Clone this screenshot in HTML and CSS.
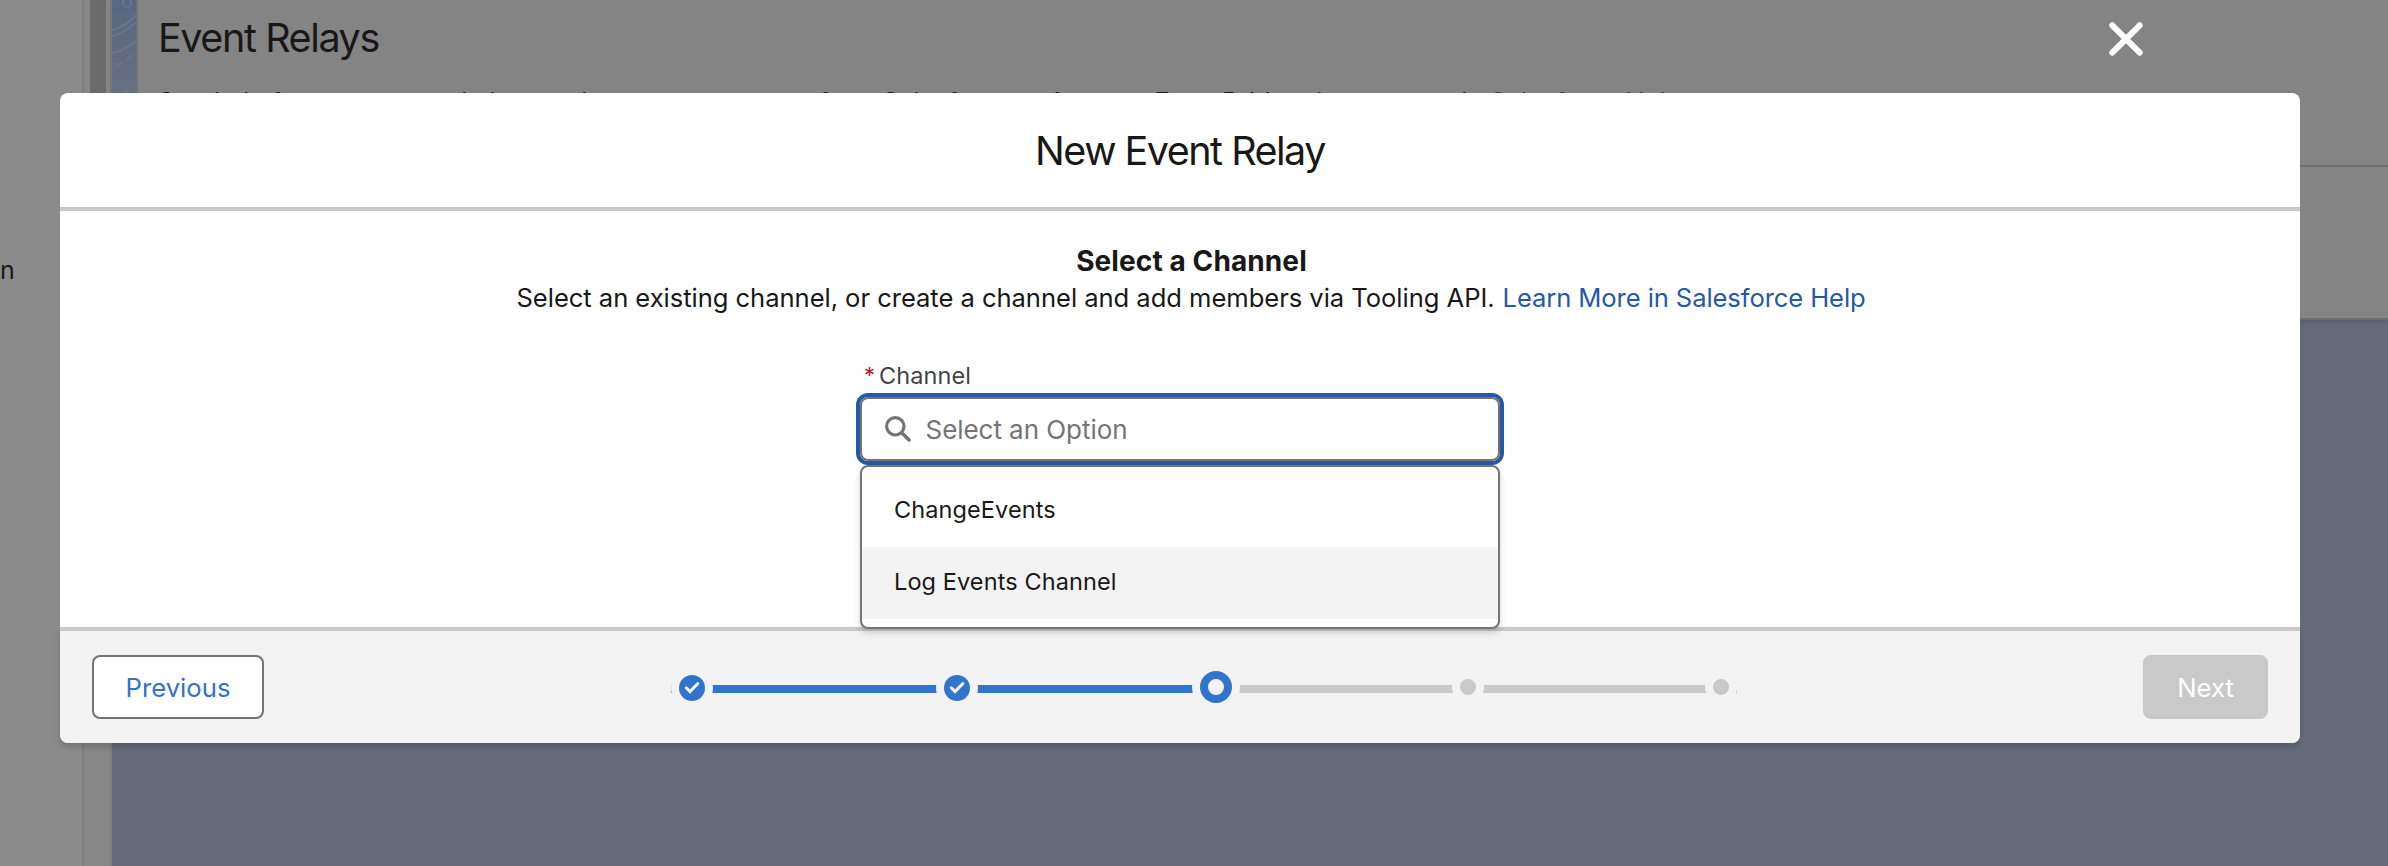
FILE: index.html
```html
<!DOCTYPE html>
<html lang="en">
<head>
<meta charset="utf-8">
<title>Event Relays</title>
<link rel="stylesheet" href="styles.css">
</head>
<body>
<div class="app">
  <aside class="sidebar"><span class="nav-tail">n</span></aside>
  <div class="gutter"><div class="scroll-thumb"></div></div>
  <main class="page">
    <div class="panel-row">
      <svg class="pattern" viewBox="0 0 24 94" fill="none" stroke="#6b7a92" stroke-width="1.5">
        <circle cx="15" cy="3" r="4"/>
        <path d="M0 30Q14 27 24 15M0 36Q15 32 24 22M0 53Q14 50 24 41"/>
        <path d="M4 65l6-2M15 60l5-5M11 92l7-2"/>
      </svg>
      <section class="panel">
        <div class="panel-head">
          <h1 class="page-title">Event Relays</h1>
          <p class="page-intro"><span>Send platform events and change data capture events from Salesforce to Amazon EventBridge.</span> <a class="intro-link">Learn more in Salesforce Help</a></p>
        </div>
      </section>
    </div>
  </main>
</div>

<svg class="close" viewBox="0 0 34 34" stroke="#fff" stroke-width="6" stroke-linecap="round"><path d="M3.3 3.3l27.4 27.4M30.7 3.3L3.3 30.7"/></svg>

<div class="modal">
  <header class="modal-head"><h2 class="modal-title">New Event Relay</h2></header>
  <div class="modal-body">
    <h3 class="step-title">Select a Channel</h3>
    <p class="step-text"><span class="step-copy">Select an existing channel, or create a channel and add members via Tooling API.</span><a class="step-link">Learn More in Salesforce Help</a></p>
    <div class="field">
      <div class="label"><span class="required">*</span><span class="label-text">Channel</span></div>
      <div class="combo">
        <svg class="search" viewBox="0 0 26 26" fill="none" stroke="#747474" stroke-width="3.2" stroke-linecap="round"><circle cx="10.3" cy="10.3" r="8.7"/><path d="M17 17l7 7" stroke-width="3.6"/></svg>
        <span class="placeholder">Select an Option</span>
        <div class="menu">
          <div class="option"><span>ChangeEvents</span></div>
          <div class="option active"><span>Log Events Channel</span></div>
        </div>
      </div>
    </div>
  </div>
  <footer class="modal-foot">
    <button class="btn prev">Previous</button>
    <div class="progress">
      <i class="bar done stub"></i>
      <i class="mark check"><svg viewBox="0 0 26 26" fill="none" stroke="#f3f3f3" stroke-width="3" stroke-linecap="round"><path d="M7.3 12.8L11 16.6L18.8 8.6"/></svg></i>
      <i class="bar done g1"></i>
      <i class="mark check"><svg viewBox="0 0 26 26" fill="none" stroke="#f3f3f3" stroke-width="3" stroke-linecap="round"><path d="M7.3 12.8L11 16.6L18.8 8.6"/></svg></i>
      <i class="bar done g2"></i>
      <i class="mark current"></i>
      <i class="bar g3"></i>
      <i class="mark dot"></i>
      <i class="bar g4"></i>
      <i class="mark dot"></i>
      <i class="bar stub"></i>
    </div>
    <button class="btn next">Next</button>
  </footer>
</div>
</body>
</html>
```

FILE: styles.css
```css
* { box-sizing: border-box; }
body {
  margin: 0;
  width: 2388px;
  height: 866px;
  overflow: hidden;
  position: relative;
  font-family: Inter, "Liberation Sans", sans-serif;
  color: #181818;
}
h1, h2, h3, p { margin: 0; font-weight: 400; }
span, a { white-space: nowrap; }

.app { display: flex; height: 866px; }
.sidebar {
  width: 84px;
  background: #8b8b8b;
  border-right: 2px solid #7f7f7f;
  padding-top: 254px;
}
.nav-tail { font-size: 25px; line-height: 32px; }
.gutter {
  width: 28px;
  background: #878787;
  border-right: 2px solid #7f7f7f;
  padding-left: 6px;
}
.scroll-thumb { width: 16px; height: 110px; background: #6b6b6b; }
.page { flex: 1; background: #656b79; }
.panel-row {
  display: flex;
  height: 320px;
  box-shadow: 0 2px 6px rgba(0, 0, 0, .15);
}
.pattern { width: 24px; height: 94px; background: linear-gradient(#586880, #676f84); }
.panel {
  flex: 1;
  background: #848484;
  border-left: 2px solid #737373;
  border-bottom: 2px solid #6f6f6f;
}
.panel-head { height: 167px; border-bottom: 2px solid #6f6f6f; padding: 14px 0 0 20px; }
.page-title { font-size: 39.5px; line-height: 48px; letter-spacing: -1.4px; }
.page-intro { font-size: 25.6px; line-height: 40px; margin-top: 20px; }
.intro-link { color: #153a6e; }

.close { position: absolute; left: 2109px; top: 22px; width: 34px; height: 34px; }

.modal {
  position: absolute;
  left: 60px;
  top: 93px;
  width: 2240px;
  height: 650px;
  display: flex;
  flex-direction: column;
  background: #fff;
  border-radius: 8px;
}
.modal-head {
  height: 118px;
  border-bottom: 4px solid #c9c9c9;
  padding-top: 34px;
  text-align: center;
}
.modal-title { font-size: 39.5px; line-height: 48px; letter-spacing: -1.5px; }
.modal-body {
  flex: 1;
  display: flex;
  flex-direction: column;
  align-items: center;
  padding-top: 32px;
}
.step-title { font-size: 28px; font-weight: 700; line-height: 36px; letter-spacing: .1px; margin-left: 23px; }
.step-text { display: flex; gap: 8px; width: 1350px; margin-left: 23px; margin-top: 1px; font-size: 25.6px; line-height: 36px; letter-spacing: -.05px; }
.step-link { color: #2559a8; letter-spacing: -.1px; }
.field { width: 640px; margin-top: 43px; }
.label { display: flex; height: 38px; gap: 5px; padding-left: 4px; font-size: 23.5px; line-height: 33px; letter-spacing: .1px; color: #444; }
.required { color: #b4221c; width: 10px; font-size: 22px; }
.combo {
  position: relative;
  display: flex;
  align-items: center;
  height: 64px;
  padding-left: 23px;
  gap: 14.5px;
  border: 2px solid #747474;
  border-radius: 8px;
  box-shadow: 0 0 0 4px #2659a5;
}
.search { width: 26px; height: 26px; }
.placeholder { font-size: 26px; letter-spacing: -.05px; color: #747474; }
.menu {
  position: absolute;
  left: -2px;
  top: 66px;
  width: 640px;
  height: 164px;
  padding: 8px 0;
  background: #fff;
  border: 2px solid #747474;
  border-radius: 8px;
  box-shadow: 0 4px 6px rgba(0, 0, 0, .16);
  z-index: 2;
}
.option { height: 72px; padding-left: 32px; font-size: 23.5px; line-height: 70px; letter-spacing: .1px; }
.active { background: #f3f3f3; }

.modal-foot {
  display: flex;
  align-items: center;
  height: 116px;
  padding: 0 32px;
  background: #f3f3f3;
  border-top: 4px solid #c9c9c9;
  border-radius: 0 0 8px 8px;
  box-shadow: 0 4px 6px rgba(0, 0, 0, .16);
}
.btn {
  height: 64px;
  padding: 0;
  border: 2px solid #747474;
  border-radius: 8px;
  background: #fff;
  font-family: inherit;
  font-size: 25.7px;
}
.prev { width: 172px; color: #3273cc; }
.next { width: 125px; margin-left: auto; border-color: #c9c9c9; background: #c9c9c9; color: #fff; }
.progress { display: flex; align-items: center; margin-left: 407px; height: 32px; }
.bar { height: 8px; background: #c9c9c9; margin-top: 4px; }
.done { background: #3273cc; }
.stub { width: 8px; }
.g1 { width: 239px; }
.g2 { width: 230px; }
.g3 { width: 228px; }
.g4 { width: 237px; }
.mark { position: relative; border-radius: 50%; box-shadow: 0 0 0 8px #f3f3f3; }
.check { width: 26px; height: 26px; background: #3273cc; margin-top: 2px; }
.check svg { display: block; }
.current { width: 32px; height: 32px; border: 8px solid #3273cc; }
.dot { width: 16px; height: 16px; background: #c9c9c9; }
```
